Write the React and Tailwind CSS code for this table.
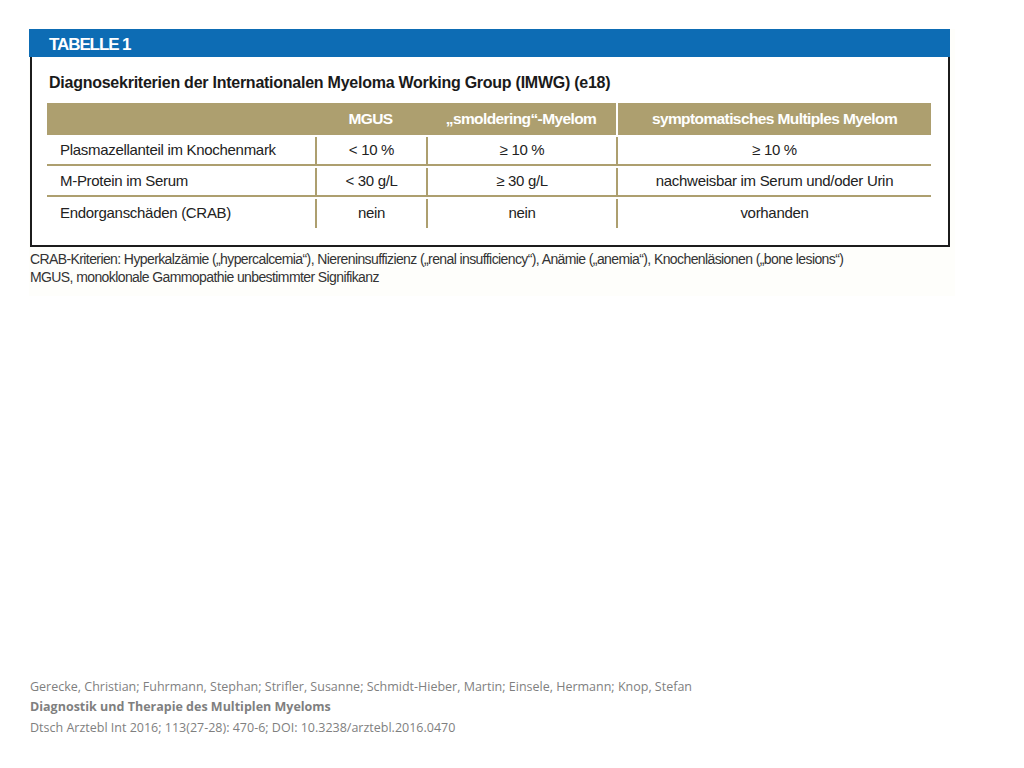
export default function App() {
  const narrow = { fontFamily: '"Liberation Sans", Arial, sans-serif' }
  const rows = [
    ['Plasmazellanteil im Knochenmark', '< 10 %', '≥ 10 %', '≥ 10 %'],
    ['M-Protein im Serum', '< 30 g/L', '≥ 30 g/L', 'nachweisbar im Serum und/oder Urin'],
    ['Endorganschäden (CRAB)', 'nein', 'nein', 'vorhanden'],
  ]

  return (
    <div className="flex h-[768px] w-[1024px] flex-col bg-white">
      <div className="ml-[29px] mt-[29px] w-[926px] bg-[#fefefb] pb-[10px]" style={narrow}>
        <div className="flex h-[28px] w-[921px] items-center bg-[#0d6cb4] pl-[20px] pt-[3px] text-[17px] font-bold tracking-[-1.1px] text-white">
          TABELLE 1
        </div>
        <div className="ml-px w-[920px] border-x-2 border-b-2 border-[#1c1c1c] bg-white pb-[17px]">
          <div className="flex h-[46px] items-center pl-[17px] pt-[5px] text-[16px] font-bold tracking-[-0.25px] text-[#1a1a1a]">
            Diagnosekriterien der Internationalen Myeloma Working Group (IMWG) (e18)
          </div>
          <div className="ml-[15px] w-[884px] text-[15px] tracking-[-0.3px] text-[#222]">
            <div className="flex h-[32px] items-center bg-[#ad9f6f] text-[15.5px] font-bold tracking-[-0.6px] text-white">
              <div className="w-[268px]" />
              <div className="w-[111px] text-center">MGUS</div>
              <div className="w-[190px] text-center">„smoldering“-Myelom</div>
              <div className="flex h-full w-[315px] items-center justify-center border-l-2 border-white">symptomatisches Multiples Myelom</div>
            </div>
            {rows.map((row, i) => (
              <div key={row[0]} className={`flex h-[31px] items-center pt-[2px] ${i < 2 ? 'border-b-2 border-[#ad9f6f]' : ''}`}>
                <div className="w-[268px] pl-[13px]">{row[0]}</div>
                <div className="flex h-full w-[111px] items-center justify-center border-l-2 border-[#ad9f6f]">{row[1]}</div>
                <div className="flex h-full w-[190px] items-center justify-center border-l-2 border-[#ad9f6f]">{row[2]}</div>
                <div className="flex h-full w-[315px] items-center justify-center border-l-2 border-[#ad9f6f]">{row[3]}</div>
              </div>
            ))}
          </div>
        </div>
        <div className="mt-[3px] pl-px text-[14px] leading-[18px] tracking-[-0.6px] text-[#333]">
          <div>CRAB-Kriterien: Hyperkalzämie („hypercalcemia“), Niereninsuffizienz („renal insufficiency“), Anämie („anemia“), Knochenläsionen („bone lesions“)</div>
          <div>MGUS, monoklonale Gammopathie unbestimmter Signifikanz</div>
        </div>
      </div>
      <div className="ml-[30px] mt-auto mb-[30px] text-[12.5px] leading-[20.5px] text-[#7f7f7f]" style={{ fontFamily: '"Open Sans", "Noto Sans", sans-serif' }}>
        <div>Gerecke, Christian; Fuhrmann, Stephan; Strifler, Susanne; Schmidt-Hieber, Martin; Einsele, Hermann; Knop, Stefan</div>
        <div className="font-bold">Diagnostik und Therapie des Multiplen Myeloms</div>
        <div>Dtsch Arztebl Int 2016; 113(27-28): 470-6; DOI: 10.3238/arztebl.2016.0470</div>
      </div>
    </div>
  )
}
